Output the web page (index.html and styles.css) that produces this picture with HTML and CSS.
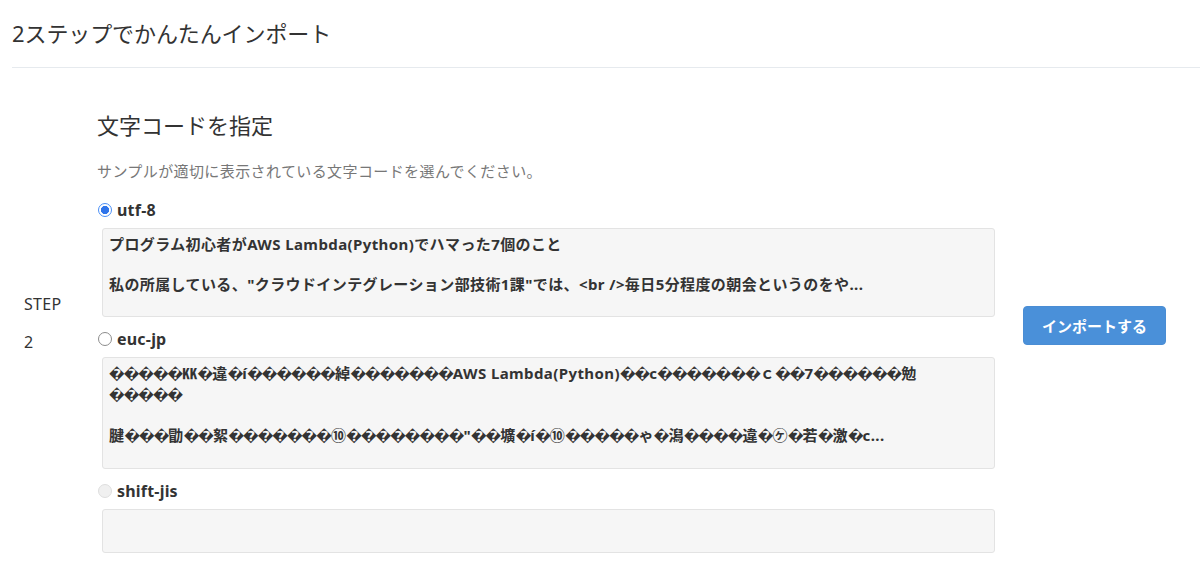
FILE: index.html
```html
<!DOCTYPE html>
<html lang="ja">
<head>
<meta charset="utf-8">
<title>2ステップでかんたんインポート</title>
<link rel="stylesheet" href="styles.css">
</head>
<body>
<header class="page-header">
  <h1 class="page-title">2ステップでかんたんインポート</h1>
</header>
<main class="step-row">
  <div class="step-label">
    <span class="step-word">STEP</span>
    <span class="step-num">2</span>
  </div>
  <div class="step-body">
    <h2 class="section-title">文字コードを指定</h2>
    <p class="section-desc">サンプルが適切に表示されている文字コードを選んでください。</p>

    <div class="option">
      <label class="option-label"><input type="radio" name="enc" class="radio" checked><span>utf-8</span></label>
      <div class="sample">
        <div class="line">プログラム初心者がAWS Lambda(Python)でハマった7個のこと</div>
        <div class="line">&nbsp;</div>
        <div class="line">私の所属している、"クラウドインテグレーション部技術1課"では、&lt;br /&gt;毎日5分程度の朝会というのをや...</div>
      </div>
    </div>

    <div class="option">
      <label class="option-label"><input type="radio" name="enc" class="radio"><span>euc-jp</span></label>
      <div class="sample">
        <div class="line"><span class="bad">�����</span>㏍<span class="bad">�</span>違<span class="bad">�</span>í<span class="bad">������</span>綽<span class="bad">�������</span>AWS Lambda(Python)<span class="bad">��</span>c<span class="bad">�������</span>ｃ<span class="bad">��</span>7<span class="bad">������</span>勉</div>
        <div class="line"><span class="bad">�����</span></div>
        <div class="line">&nbsp;</div>
        <div class="line">腱<span class="bad">���</span>勖<span class="bad">��</span>絮<span class="bad">�������</span>⑩<span class="bad">��������</span>"<span class="bad">��</span>壙<span class="bad">�</span>í<span class="bad">�</span>⑩<span class="bad">�����</span>ゃ<span class="bad">�</span>潟<span class="bad">����</span>違<span class="bad">�</span>㋘<span class="bad">�</span>若<span class="bad">�</span>激<span class="bad">�</span>c...</div>
      </div>
    </div>

    <div class="option">
      <label class="option-label"><input type="radio" name="enc" class="radio" disabled><span>shift-jis</span></label>
      <div class="sample sample-empty"></div>
    </div>
  </div>
  <div class="step-action">
    <button type="button" class="btn-import">インポートする</button>
  </div>
</main>
</body>
</html>
```

FILE: styles.css
```css
* { box-sizing: border-box; }

html, body {
  margin: 0;
  padding: 0;
  background: #fff;
}

body {
  font-family: "Noto Sans", "Noto Sans CJK JP", sans-serif;
  color: #333;
  font-size: 15px;
  line-height: 20px;
}

.page-header {
  margin-left: 12px;
  padding: 18px 0 19px;
  border-bottom: 1px solid #e6eaee;
}

.page-title {
  margin: 0;
  font-size: 22px;
  line-height: 30px;
  font-weight: 400;
  color: #333;
  letter-spacing: -0.1px;
}

.step-row {
  display: flex;
  align-items: center;
  padding-top: 13px;
}

.step-label {
  width: 97px;
  padding-left: 24px;
  display: flex;
  flex-direction: column;
  gap: 18px;
  font-size: 16px;
  line-height: 20px;
  letter-spacing: 0.3px;
  color: #333;
}

.step-body {
  width: 898px;
  padding-top: 29px;
}

.section-title {
  margin: 0 0 21px;
  font-size: 22px;
  line-height: 30px;
  font-weight: 400;
  color: #333;
}

.section-desc {
  margin: 0 0 19px;
  font-size: 15px;
  line-height: 20px;
  letter-spacing: 0.4px;
  color: #777;
}

.option {
  margin-bottom: 12px;
}

.option-label {
  display: flex;
  align-items: center;
  height: 20px;
  margin-left: 1px;
  font-size: 16px;
  font-weight: 700;
  letter-spacing: 0.2px;
  color: #333;
}

.radio {
  appearance: none;
  -webkit-appearance: none;
  margin: 0 5px 0 0;
  width: 14px;
  height: 14px;
  border-radius: 50%;
  border: 1px solid #8c8c8c;
  background: #fff;
  flex: none;
}

.radio:checked {
  border: 1.5px solid #4b8ff6;
  background: radial-gradient(circle, #2f74ea 0 3.8px, #fff 4.4px);
}

.radio:disabled {
  border: 1px solid #dedede;
  background: #f0f0f0;
}

.sample {
  margin: 8px 0 0 5px;
  padding: 5px 6px 22px;
  background: #f6f6f6;
  border: 1px solid #e3e3e3;
  border-radius: 3px;
  font-size: 15px;
  font-weight: 700;
  line-height: 20px;
  letter-spacing: 0.4px;
  color: #333;
  overflow: hidden;
}

.line {
  white-space: nowrap;
}

.bad {
  font-family: "DejaVu Sans", sans-serif;
  font-size: 14px;
  letter-spacing: -0.95px;
}

.sample-empty {
  height: 44px;
  padding: 0;
}

.step-action {
  padding-left: 28px;
  padding-top: 4px;
}

.btn-import {
  font-family: "Noto Sans CJK JP", sans-serif;
  font-size: 15px;
  font-weight: 700;
  line-height: 21px;
  color: #fff;
  background: #4a90d9;
  border: 1px solid #4a8dd4;
  border-radius: 4px;
  padding: 8px 18px;
  width: 143px;
  height: 39px;
  cursor: pointer;
}
```
